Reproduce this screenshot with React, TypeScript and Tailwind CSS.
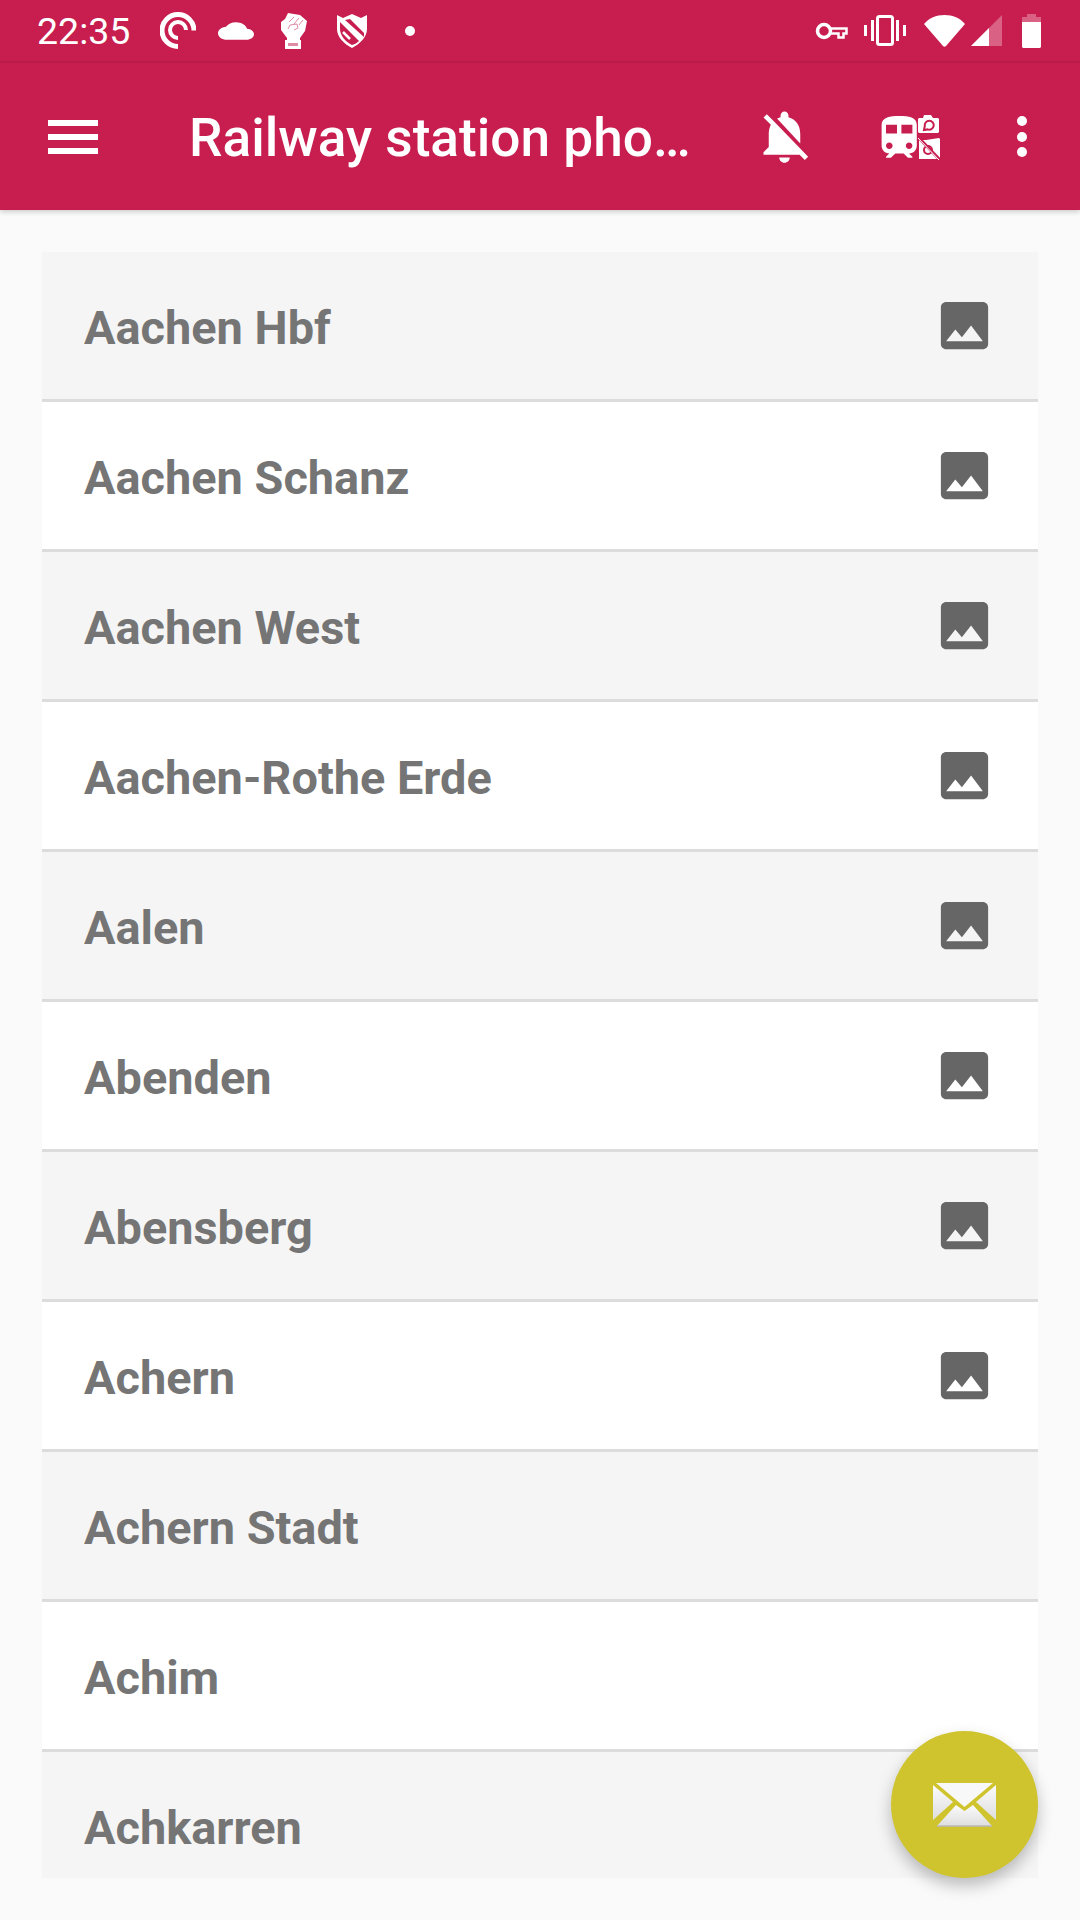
const stations = [
  "Aachen Hbf",
  "Aachen Schanz",
  "Aachen West",
  "Aachen-Rothe Erde",
  "Aalen",
  "Abenden",
  "Abensberg",
  "Achern",
  "Achern Stadt",
  "Achim",
  "Achkarren",
];

// stations from index 8 on have no photo yet
const withPhoto = 8;

function PhotoIcon() {
  return (
    <svg viewBox="0 0 24 24" className="h-[63px] w-[63px] fill-[#666666]">
      <path d="M21 19V5c0-1.1-.9-2-2-2H5c-1.1 0-2 .9-2 2v14c0 1.1.9 2 2 2h14c1.1 0 2-.9 2-2zM8.5 13.5l2.5 3.01L14.5 12l4.5 6H5l3.5-4.5z" />
    </svg>
  );
}

function StatusBar() {
  return (
    <div className="flex h-[63px] items-center border-b-2 border-[#bd1c4a] pl-[37px] text-white">
      <span className="w-[93px] pt-[2px] text-[37.5px] leading-none font-['Roboto',sans-serif]">22:35</span>
      {/* pocket casts */}
      <svg viewBox="0 0 36 37" className="ml-[30px] h-[37px] w-[36px] fill-none stroke-white">
        <path d="M18 34.5A16 16 0 1 1 34 18.5" strokeWidth="5" />
        <path d="M18 26A8 8 0 1 1 26 18" strokeWidth="4" />
      </svg>
      {/* cloud */}
      <svg viewBox="0 2 24 20" preserveAspectRatio="none" className="ml-[22px] h-[22px] w-[36px] fill-white">
        <path d="M19.35 10.04C18.67 6.59 15.64 4 12 4 9.11 4 6.6 5.64 5.35 8.04 2.34 8.36 0 10.91 0 14c0 3.31 2.69 6 6 6h13c2.76 0 5-2.24 5-5 0-2.64-2.05-4.78-4.65-4.96z" />
      </svg>
      {/* fist */}
      <svg viewBox="0 0 27 37" className="ml-[26px] h-[37px] w-[27px]">
        <path d="M8 1l12 2 7 6-2 10-5 7v2H7v-2L1 18v-8l4-3z" fill="#fff" />
        <path d="M9 10l5-5M14 12l5-6M19 13l4-5M8 17l2-4 7-1 1 4-4 2" stroke="#e08aa3" strokeWidth="1" fill="none" />
        <rect x="5" y="28" width="16" height="9" fill="#fff" />
        <rect x="8" y="31" width="10" height="3" fill="#e08aa3" />
      </svg>
      {/* shield */}
      <svg viewBox="0 0 32 35" className="ml-[29px] h-[35px] w-[32px]">
        <path d="M1 2l6 3 9-4 9 4 6-3v14c0 8-7 15-15 19C8 31 1 24 1 16z" fill="#fff" />
        <path d="M4 9l19 19c-2 2-4 3-7 4-6-3-12-9-12-16z" fill="#c71d4f" />
        <path d="M9 7l19 17V20L14 6z" fill="#c71d4f" />
        <path d="M7 19l7 7" stroke="#fff" strokeWidth="2.5" />
      </svg>
      <span className="ml-[37px] h-[10px] w-[10px] rounded-full bg-white" />
      {/* key */}
      <svg viewBox="0 0 33 18" className="ml-[400px] h-[18px] w-[33px] fill-none stroke-white">
        <circle cx="9" cy="9" r="6.5" strokeWidth="3.5" />
        <path d="M15 6.5h16.5v5h-3v4h-5v-4H15" strokeWidth="2.5" />
      </svg>
      {/* vibrate */}
      <svg viewBox="0 0 42 31" className="ml-[16px] h-[31px] w-[42px] fill-white">
        <rect x="0" y="10" width="3" height="11" />
        <rect x="7" y="5" width="3" height="21" />
        <rect x="32" y="5" width="3" height="21" />
        <rect x="39" y="10" width="3" height="11" />
        <rect x="13.5" y="1.5" width="15" height="28" rx="2" fill="none" stroke="#fff" strokeWidth="3" />
      </svg>
      {/* wifi */}
      <svg viewBox="0 0 41 32" className="ml-[18px] h-[32px] w-[41px] fill-white">
        <path d="M0 9C5 3 12 0 20.5 0S36 3 41 9L22 31c-1 1-2 1-3 0z" />
      </svg>
      {/* signal */}
      <svg viewBox="0 0 31 31" className="ml-[6px] h-[31px] w-[31px]">
        <path d="M0 31L31 0v31z" fill="#fff" fillOpacity="0.3" />
        <path d="M0 31l18-18v18z" fill="#fff" />
      </svg>
      {/* battery */}
      <svg viewBox="0 0 19 34" className="ml-[20px] h-[34px] w-[19px]">
        <path d="M5 0h9v3h5v6H0V3h5z" fill="#fff" fillOpacity="0.3" />
        <path d="M0 8h19v25l-1 1H1l-1-1z" fill="#fff" />
      </svg>
    </div>
  );
}

function Toolbar() {
  return (
    <div className="relative z-10 flex h-[147px] items-center bg-[#c71d4f] pl-[48px] text-white shadow-[0_2px_5px_rgba(0,0,0,0.18)]">
      <div className="flex w-[50px] flex-col gap-[8px]">
        <span className="h-[6px] bg-white" />
        <span className="h-[6px] bg-white" />
        <span className="h-[6px] bg-white" />
      </div>
      <h1 className="ml-[91px] w-[563.5px] pt-[4px] text-[53.2px] leading-none font-medium whitespace-nowrap font-['Roboto',sans-serif]">
        Railway station pho…
      </h1>
      <svg viewBox="0 0 24 24" className="h-[63px] w-[63px] fill-white">
        <path d="M20 18.69L7.84 6.14 5.27 3.49 4 4.76l2.8 2.8v.01c-.52.99-.8 2.16-.8 3.42v5l-2 2v1h13.73l2 2L21 19.72l-1-1.03zM12 22c1.11 0 2-.89 2-2h-4c0 1.11.89 2 2 2zm6-7.32V11c0-3.08-1.64-5.64-4.5-6.32V4c0-.83-.67-1.5-1.5-1.5s-1.5.67-1.5 1.5v.68c-.15.03-.29.08-.42.12-.1.03-.2.07-.3.11h-.01c-.2.08-.4.17-.59.27-.01 0-.01 0-.02.01L18 14.68z" />
      </svg>
      {/* train with the two photo states */}
      <svg viewBox="0 0 60 46" className="ml-[64px] h-[46px] w-[60px]">
        <g transform="translate(-7.2 -2.4) scale(2.2)" fill="#fff">
          <path d="M12 2c-4 0-8 .5-8 4v9.5C4 17.43 5.57 19 7.5 19L6 20.5v.5h2.23l2-2H14l2 2h2v-.5L16.5 19c1.93 0 3.5-1.57 3.5-3.5V6c0-3.5-3.58-4-8-4zM7.5 17c-.83 0-1.5-.67-1.5-1.5S6.67 14 7.5 14s1.5.67 1.5 1.5S8.33 17 7.5 17zm3.5-7H6V6h5v4zm2 0V6h5v4h-5zm3.5 7c-.83 0-1.5-.67-1.5-1.5s.67-1.5 1.5-1.5 1.5.67 1.5 1.5-.67 1.5-1.5 1.5z" />
        </g>
        <path d="M38 5l1-1h4l1-3h7l2 3h5l1 1v13l-1 1H39l-1-1z" fill="#fff" />
        <path d="M44 16l.8-4a4.5 4.5 0 1 1 2.8 3.4z" fill="none" stroke="#c71d4f" strokeWidth="2" />
        <path d="M39 26h5l2 0 13-2 1 1v20H39z" fill="#fff" />
        <circle cx="48" cy="36" r="4" fill="none" stroke="#c71d4f" strokeWidth="2" />
        <path d="M38 23l22 23" stroke="#c71d4f" strokeWidth="3" />
        <path d="M38 24l21 22" stroke="#fff" strokeWidth="1" />
      </svg>
      <div className="ml-[77px] flex w-[10px] flex-col gap-[5.5px]">
        <span className="h-[10px] rounded-full bg-white" />
        <span className="h-[10px] rounded-full bg-white" />
        <span className="h-[10px] rounded-full bg-white" />
      </div>
    </div>
  );
}

export default function App() {
  return (
    <main className="relative h-[1920px] w-[1080px] overflow-hidden bg-[#fafafa] font-['Roboto',sans-serif]">
      <div className="bg-[#c71d4f]">
        <StatusBar />
      </div>
      <Toolbar />

      <section className="mx-[42px] mt-[42px] h-[1626px] overflow-hidden">
        {stations.map((name, i) => (
          <div
            key={name}
            className={`flex h-[150px] items-start border-b-[3px] border-[#dcdcdc] ${
              i % 2 === 0 ? "bg-[#f5f5f5]" : "bg-white"
            }`}
          >
            <div className="flex h-[147px] w-full items-center justify-between pr-[42px] pl-[42px]">
              <span className="pt-[5px] text-[46.9px] font-bold text-[#757575]">{name}</span>
              {i < withPhoto && <PhotoIcon />}
            </div>
          </div>
        ))}
      </section>

      <button className="absolute top-[1731px] left-[891px] flex h-[147px] w-[147px] items-center justify-center rounded-full bg-[#cfc42e] shadow-[0_8px_16px_rgba(0,0,0,0.25)]">
        <svg viewBox="0 0 63 44" className="h-[44px] w-[63px]">
          <defs>
            <linearGradient id="mail" x1="0" y1="0" x2="0" y2="1">
              <stop offset="0" stopColor="#fbfbfb" />
              <stop offset="1" stopColor="#dedede" />
            </linearGradient>
          </defs>
          <path d="M3 0h57L31.5 24z" fill="#f8f8f8" />
          <path d="M0 2l20 17L0 37z" fill="url(#mail)" />
          <path d="M63 2L43 19l20 18z" fill="url(#mail)" />
          <path d="M4 43l19-21 8.5 6 8.5-6 19 21z" fill="url(#mail)" />
          <path d="M4 43h55" stroke="#b9b9b9" strokeWidth="1.5" />
        </svg>
      </button>
    </main>
  );
}
